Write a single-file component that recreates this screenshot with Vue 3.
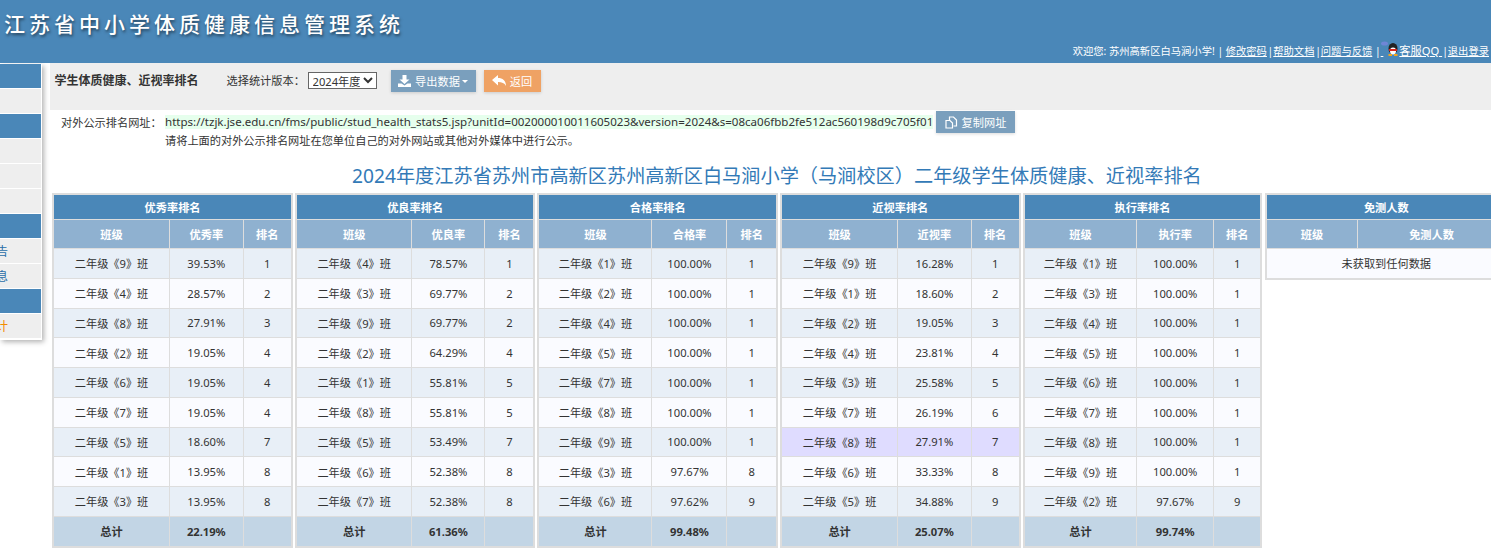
<template>
  <div class="page">
    <header class="top">
      <h1 class="top__title">江苏省中小学体质健康信息管理系统</h1>
      <div class="top__links">
        欢迎您: 苏州高新区白马涧小学! | <a class="tight">修改密码</a> |<a class="tight">帮助文档</a> |<a>问题与反馈</a> |<a class="gap">&nbsp;</a>
        <svg class="qq" width="18" height="16" viewBox="0 0 18 16">
          <ellipse cx="3.500" cy="2.500" rx="3.500" ry="2" fill="#6f86d6" />
          <ellipse cx="12" cy="7.500" rx="4.500" ry="5.500" fill="#222" />
          <ellipse cx="12" cy="10" rx="3" ry="3.400" fill="#fff" />
          <rect x="8" y="8" width="8" height="2" fill="#d8261c" />
          <rect x="7.500" y="13" width="3.500" height="2" fill="#f2a51e" />
          <rect x="13" y="13" width="3.500" height="2" fill="#f2a51e" />
        </svg><a class="kefu">客服QQ </a>|<a>退出登录</a>
      </div>
    </header>

    <div class="body">
      <aside class="side">
        <div
          v-for="(item, i) in sideItems"
          :key="i"
          class="side__item"
          :class="item.type"
        >
          {{ item.text }}
        </div>
      </aside>

      <main class="main">
        <div class="bar">
          <strong class="bar__name">学生体质健康、近视率排名</strong>
          <span class="bar__label">选择统计版本：</span>
          <select class="bar__select">
            <option>2024年度</option>
          </select>
          <button class="btn btn--blue">
            <svg width="13" height="12" viewBox="0 0 13 12">
              <path d="M4.500 0h4v4.500h3L6.500 9 1.500 4.500h3z" fill="#fff" />
              <path d="M0 8.500h3.500L6.500 10.500 9.500 8.500H13V12H0z" fill="#fff" />
            </svg>
            导出数据<i class="caret" />
          </button>
          <button class="btn btn--orange">
            <svg width="14" height="12" viewBox="0 0 14 12">
              <path d="M6 0v3c4.500 0 8 2.500 8 8-1.500-3-4-4-8-4v3.500L0 5z" fill="#fff" />
            </svg>
            返回
          </button>
        </div>

        <div class="share">
          <span class="share__label">对外公示排名网址：</span>
          <span class="share__url">https://tzjk.jse.edu.cn/fms/public/stud_health_stats5.jsp?unitId=002000010011605023&amp;version=2024&amp;s=08ca06fbb2fe512ac560198d9c705f01</span>
          <button class="btn btn--blue btn--copy">
            <svg width="13" height="13" viewBox="0 0 13 13" fill="none" stroke="#fff" stroke-width="1.200">
              <path d="M4.500 4V1h4l3 3v6H8.500" />
              <path d="M1 4.500h4l2.500 2.500v5H1z" />
            </svg>
            复制网址
          </button>
        </div>
        <p class="hint">请将上面的对外公示排名网址在您单位自己的对外网站或其他对外媒体中进行公示。</p>

        <h2 class="heading">2024年度江苏省苏州市高新区苏州高新区白马涧小学（马涧校区）二年级学生体质健康、近视率排名</h2>

        <div class="tables">
          <table v-for="t in tables" :key="t.title" class="rank">
            <colgroup>
              <col v-for="w in t.cols" :key="w" :style="{ width: w + 'px' }" />
            </colgroup>
            <thead>
              <tr class="rank__title">
                <th :colspan="t.cols.length">{{ t.title }}</th>
              </tr>
              <tr class="rank__head">
                <th v-for="h in t.heads" :key="h">{{ h }}</th>
              </tr>
            </thead>
            <tbody>
              <tr
                v-for="(r, i) in t.rows"
                :key="i"
                :class="{ odd: i % 2 === 0, mark: r[0] === t.mark }"
              >
                <td>二年级《{{ r[0] }}》班</td>
                <td>{{ r[1] }}%</td>
                <td>{{ r[2] }}</td>
              </tr>
              <tr v-if="!t.rows.length">
                <td :colspan="t.cols.length">未获取到任何数据</td>
              </tr>
              <tr v-if="t.total" class="rank__total">
                <td>总计</td>
                <td>{{ t.total }}</td>
                <td></td>
              </tr>
            </tbody>
          </table>
        </div>
      </main>
    </div>
  </div>
</template>

<script setup>
const sideItems = [
  { text: '', type: 'head' },
  { text: '', type: '' },
  { text: '', type: 'head' },
  { text: '', type: '' },
  { text: '', type: '' },
  { text: '', type: '' },
  { text: '', type: 'head' },
  { text: '公告', type: '' },
  { text: '信息', type: '' },
  { text: '', type: 'head' },
  { text: '统计', type: 'hot' },
]

const tables = [
  {
    title: '优秀率排名',
    heads: ['班级', '优秀率', '排名'],
    cols: [116, 74, 48.5],
    total: '22.19%',
    rows: [
      [9, '39.53', 1], [4, '28.57', 2], [8, '27.91', 3],
      [2, '19.05', 4], [6, '19.05', 4], [7, '19.05', 4],
      [5, '18.60', 7], [1, '13.95', 8], [3, '13.95', 8],
    ],
  },
  {
    title: '优良率排名',
    heads: ['班级', '优良率', '排名'],
    cols: [116, 73, 49.5],
    total: '61.36%',
    rows: [
      [4, '78.57', 1], [3, '69.77', 2], [9, '69.77', 2],
      [2, '64.29', 4], [1, '55.81', 5], [8, '55.81', 5],
      [5, '53.49', 7], [6, '52.38', 8], [7, '52.38', 8],
    ],
  },
  {
    title: '合格率排名',
    heads: ['班级', '合格率', '排名'],
    cols: [113.5, 75, 50],
    total: '99.48%',
    rows: [
      [1, '100.00', 1], [2, '100.00', 1], [4, '100.00', 1],
      [5, '100.00', 1], [7, '100.00', 1], [8, '100.00', 1],
      [9, '100.00', 1], [3, '97.67', 8], [6, '97.62', 9],
    ],
  },
  {
    title: '近视率排名',
    heads: ['班级', '近视率', '排名'],
    cols: [116.5, 73.5, 48.5],
    total: '25.07%',
    mark: 8,
    rows: [
      [9, '16.28', 1], [1, '18.60', 2], [2, '19.05', 3],
      [4, '23.81', 4], [3, '25.58', 5], [7, '26.19', 6],
      [8, '27.91', 7], [6, '33.33', 8], [5, '34.88', 9],
    ],
  },
  {
    title: '执行率排名',
    heads: ['班级', '执行率', '排名'],
    cols: [113, 77, 47.5],
    total: '99.74%',
    rows: [
      [1, '100.00', 1], [3, '100.00', 1], [4, '100.00', 1],
      [5, '100.00', 1], [6, '100.00', 1], [7, '100.00', 1],
      [8, '100.00', 1], [9, '100.00', 1], [2, '97.67', 9],
    ],
  },
  {
    title: '免测人数',
    heads: ['班级', '免测人数'],
    cols: [91, 149],
    rows: [],
  },
]
</script>

<style>
html,
body {
  overflow: hidden;
  background: #fff;
}
</style>

<style scoped>
.page {
  width: 1491px;
  height: 554px;
  overflow: hidden;
  font-family: "Noto Sans", "Noto Sans CJK SC", sans-serif;
  font-size: 11.2px;
  color: #333;
}

.top {
  position: relative;
  height: 63px;
  background: #4a87b8;
  color: #fff;
}

.top__title {
  margin: 0;
  padding: 12px 0 0 4px;
  font-size: 21px;
  line-height: 24px;
  font-weight: 500;
  letter-spacing: 4px;
  text-shadow: 1px 2px 3px rgba(0, 0, 0, 0.5);
  white-space: nowrap;
}

.top__links {
  position: absolute;
  right: 2px;
  bottom: 4px;
  white-space: nowrap;
  font-size: 10.3px;
  line-height: 16px;
}

.top__links a {
  text-decoration: underline;
}

.top__links .tight {
  margin-right: -2px;
}

.top__links .kefu {
  font-size: 11.2px;
}

.qq {
  vertical-align: -2px;
  margin-left: -2px;
}

.body {
  display: flex;
  align-items: flex-start;
}

.side {
  flex: none;
  width: 42px;
  margin: 1px 8px 0 0;
  background: #fff;
  box-shadow: 2px 2px 5px rgba(0, 0, 0, 0.3);
  padding-bottom: 1px;
}

.side__item {
  display: flex;
  justify-content: flex-end;
  align-items: center;
  height: 24px;
  margin-bottom: 1px;
  margin-right: 1px;
  padding-right: 33px;
  overflow: hidden;
  white-space: nowrap;
  background: #eee;
  color: #2a6fa8;
  font-size: 12px;
}

.side__item.head {
  background: #4a87b8;
  color: #fff;
}

.side__item.hot {
  color: #f28c00;
}

.main {
  flex: none;
  width: 1441px;
}

.bar {
  display: flex;
  align-items: flex-start;
  height: 47px;
  padding: 7px 0 0 4.5px;
  box-sizing: border-box;
  background: #eee;
}

.bar__name {
  width: 172px;
  flex: none;
  font-size: 12px;
  line-height: 22px;
  font-weight: 700;
}

.bar__label {
  width: 81px;
  flex: none;
  line-height: 22px;
}

.bar__select {
  width: 69px;
  height: 17px;
  margin: 2px 14px 0 0;
  padding: 0;
  border: 1px solid #666;
  border-radius: 0;
  background: #fff;
  font: inherit;
  color: #333;
}

.btn {
  display: inline-flex;
  align-items: center;
  justify-content: center;
  gap: 4px;
  height: 22px;
  padding: 0;
  border: 0;
  font: inherit;
  color: #fff;
  box-shadow: 0 1px 3px rgba(0, 0, 0, 0.15);
}

.btn--blue {
  width: 85px;
  margin-right: 8px;
  background: #7a9fbd;
}

.btn--orange {
  width: 57px;
  background: #efa264;
}

.btn--copy {
  width: 79px;
  margin: 0;
  margin-left: 3px;
}

.caret {
  width: 0;
  height: 0;
  margin-left: -2px;
  border: 3px solid transparent;
  border-top-color: #fff;
  border-bottom: 0;
}

.share {
  display: flex;
  align-items: center;
  height: 22px;
  padding: 1px 0 0 11px;
}

.share__label {
  width: 104px;
  flex: none;
  white-space: nowrap;
}

.share__url {
  flex: none;
  width: 768px;
  font-size: 11.55px;
  line-height: 14px;
  background: #e6ffed;
  white-space: nowrap;
  overflow: hidden;
}

.hint {
  margin: 0;
  padding: 0 0 0 115px;
  line-height: 16px;
}

.heading {
  margin: 14px 0 0;
  padding-left: 302px;
  font-size: 19.2px;
  line-height: 26px;
  font-weight: 400;
  color: #337ab7;
  white-space: nowrap;
}

.tables {
  display: grid;
  grid-template-columns: repeat(6, 238.5px);
  column-gap: 4.1px;
  align-items: start;
  margin-top: 4px;
  padding-left: 2.3px;
}

.rank {
  width: 100%;
  table-layout: fixed;
  border-collapse: collapse;
  border: 2px solid #ddd;
}

.rank th,
.rank td {
  padding: 0;
  border: 1px solid #ddd;
  text-align: center;
  white-space: nowrap;
}

.rank th {
  color: #fff;
  font-weight: 700;
}

.rank__title th {
  height: 24px;
  background: #4a87b8;
}

.rank__head th {
  height: 28px;
  background: #8fb1d0;
}

.rank td {
  height: 28.75px;
  background: #fafbff;
}

.rank tr.odd td {
  background: #e8eff7;
}

.rank tr.mark td {
  background: #dfdcff;
}

.rank tr.rank__total td {
  background: #c2d5e5;
  font-weight: 700;
}
</style>
